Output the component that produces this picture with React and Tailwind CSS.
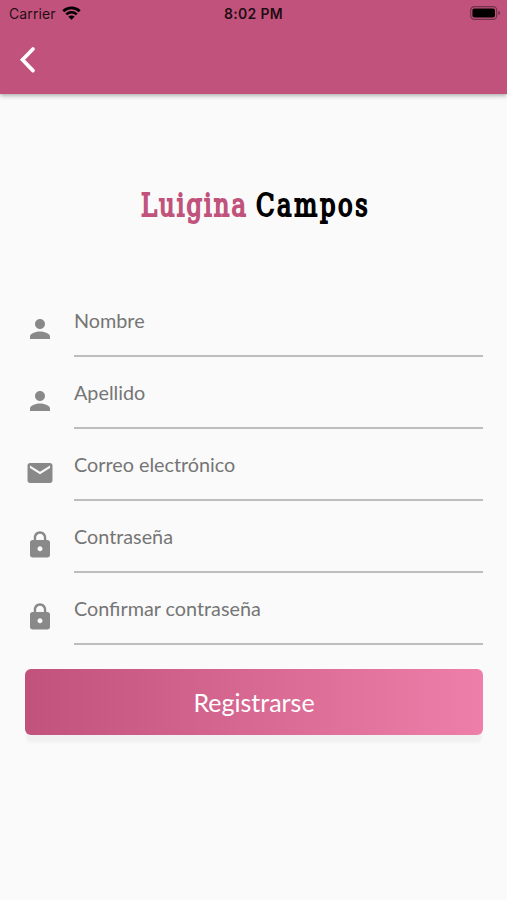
import { MdEmail, MdLock, MdPerson } from 'react-icons/md'

const fields = [
  { id: 'nombre', label: 'Nombre', type: 'text', icon: MdPerson },
  { id: 'apellido', label: 'Apellido', type: 'text', icon: MdPerson },
  { id: 'correo', label: 'Correo electrónico', type: 'email', icon: MdEmail },
  { id: 'password', label: 'Contraseña', type: 'password', icon: MdLock },
  { id: 'confirm', label: 'Confirmar contraseña', type: 'password', icon: MdLock },
]

function StatusBar() {
  return (
    <div className="grid h-[27px] grid-cols-3 items-center pl-[9px] pr-[6px] font-['Inter',sans-serif] text-[14px] text-black/85">
      <div className="flex items-center gap-[6px]">
        <span className="tracking-[0.1px]">Carrier</span>
        <svg width="19" height="14" viewBox="0 0 19 14" fill="none" className="-mt-px">
          <path d="M1.3 5.2a11.8 11.8 0 0 1 16.4 0" stroke="#000" strokeWidth="2.8" />
          <path d="M4.3 8.4a7.5 7.5 0 0 1 10.4 0" stroke="#000" strokeWidth="2.6" />
          <path d="M9.5 13.8 6.4 10.8a4.4 4.4 0 0 1 6.2 0Z" fill="#000" />
        </svg>
      </div>
      <span className="pr-[3px] text-center font-semibold tracking-[0.3px]">8:02 PM</span>
      <svg width="31" height="14" viewBox="0 0 31 14" className="-mt-px justify-self-end">
        <rect x="0.7" y="0.7" width="26" height="12.6" rx="3.6" fill="none" stroke="#000" strokeOpacity="0.4" strokeWidth="1.2" />
        <rect x="2.4" y="2.4" width="22.6" height="9.2" rx="2" fill="#000" />
        <path d="M28.3 4.8c2.4.9 2.4 3.500 0 4.400Z" fill="#000" fillOpacity="0.4" />
      </svg>
    </div>
  )
}

function Field({ id, label, type, icon: Icon }) {
  return (
    <div className="flex h-[72px]">
      <Icon className="mt-[14px] size-[30px] shrink-0 text-[#898989]" />
      <div className="ml-[19px] h-[57px] flex-1 border-b-2 border-[#bdbdbd] pt-[7px]">
        <input
          id={id}
          type={type}
          placeholder={label}
          aria-label={label}
          className="block h-7 w-full bg-transparent text-[19.8px] text-gray-900 placeholder-[#757575] outline-none"
        />
      </div>
    </div>
  )
}

export default function App() {
  return (
    <div className="flex h-[900px] w-full flex-col overflow-hidden bg-[#fafafa] font-['Lato',sans-serif]">
      <header className="h-[94px] shrink-0 bg-[#c0527b] shadow-[0_1px_5px_rgba(0,0,0,0.4)]">
        <StatusBar />
        <button type="button" aria-label="Atrás" className="ml-[19px] mt-[19px] block">
          <svg width="18" height="28" viewBox="0 0 18 28" fill="none">
            <path d="M14 3 3.500 13.800 14 24.600" stroke="#fff" strokeWidth="3.700" strokeLinecap="round" />
          </svg>
        </button>
      </header>

      <h1 className="mt-[86px] flex h-[50px] items-center justify-center whitespace-pre font-['DejaVu_Serif_Condensed','DejaVu_Serif',serif] text-[32.5px] [-webkit-text-stroke:1.8px_currentColor]">
        <span className="scale-x-[0.83] pl-[6px] tracking-[2.4px] [word-spacing:-2px]">
          <span className="text-[#c0527b]">Luigina</span> <span className="tracking-[3.2px]">Campos</span>
        </span>
      </h1>

      <form className="mt-[70px] flex flex-col pl-[25px] pr-[24px]">
        {fields.map((field) => (
          <Field key={field.id} {...field} />
        ))}
        <button
          type="button"
          className="mt-[9px] h-[66px] rounded-[6px] bg-linear-to-r from-[#c0527b] to-[#ee7faa] pt-[2px] text-[25px] text-white shadow-[0_9px_2px_-1px_rgba(0,0,0,0.035)]"
        >
          Registrarse
        </button>
      </form>
    </div>
  )
}
